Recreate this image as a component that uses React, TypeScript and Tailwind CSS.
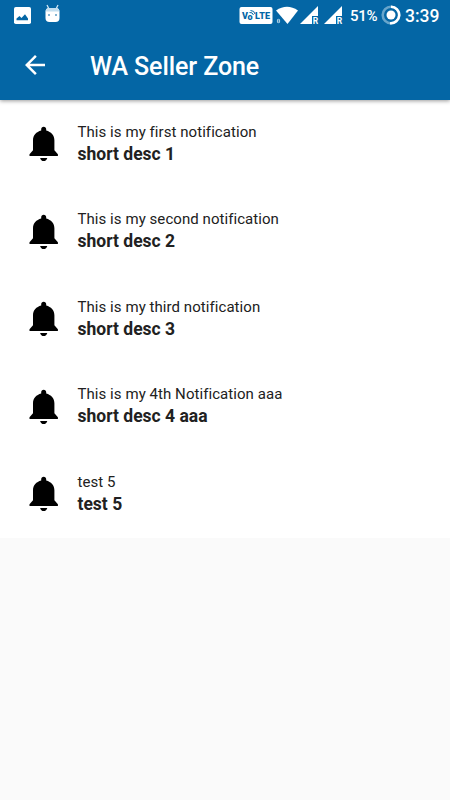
const items = [
  { title: 'This is my first notification', desc: 'short desc 1' },
  { title: 'This is my second notification', desc: 'short desc 2' },
  { title: 'This is my third notification', desc: 'short desc 3' },
  { title: 'This is my 4th Notification aaa', desc: 'short desc 4 aaa' },
  { title: 'test 5', desc: 'test 5' },
];

function Bell() {
  return (
    <svg className="mt-[26px] h-[36px] w-[30px] shrink-0" viewBox="0 0 30 36" fill="#000">
      <path d="M14.700 .8c-1.500 0-2.500 1.100-2.500 2.500v1.200C7.300 5.800 4 9.400 4 14.200V24.300L.5 28.300V30h28.400V28.300L25.400 24.300V14.200C25.400 9.400 22.100 5.800 17.200 4.500V3.300C17.200 1.900 16.200 .8 14.700 .8z" />
      <path d="M11.100 32h7.200c-.5 1.900-1.800 3.100-3.600 3.100s-3.100-1.200-3.600-3.100z" />
    </svg>
  );
}

function Signal() {
  return (
    <svg className="h-[20px] w-[20px] shrink-0" viewBox="0 0 20 20">
      <path d="M18 0V10H12V18H0z" fill="#fff" />
      <text x="12.700" y="17.800" fontSize="8.500" fontWeight="700" fontFamily="Roboto, sans-serif" fill="#fff">R</text>
    </svg>
  );
}

function StatusBar() {
  return (
    <div className="flex h-[31px] items-start text-white">
      <svg className="mt-[7px] ml-[14px] h-[17px] w-[17px]" viewBox="0 0 17 17">
        <rect width="17" height="17" rx="1.800" fill="#fff" />
        <path d="M2.500 13.300V11.500L5.500 9L7.500 11L11 7.200L14 11.500V13.300z" fill="#0466a5" />
      </svg>
      <svg className="mt-[4px] ml-[13px] h-[19px] w-[17px]" viewBox="0 0 17 19">
        <path d="M3 1L5 5M14 1L12 5" stroke="#cfe5f3" strokeWidth="1.300" />
        <path d="M1.500 8Q1.500 4 5 4h7q3.500 0 3.500 4v6q0 4-4 4h-6q-4 0-4-4z" fill="#fff" />
        <path d="M1.500 7.500Q2 4 5 4h7q3 0 3.500 3.500z" fill="#c4dfef" />
        <circle cx="5" cy="11" r="1" fill="#5b9cc4" />
        <circle cx="12" cy="11" r="1" fill="#5b9cc4" />
      </svg>
      <svg className="mt-[7px] ml-[178px] h-[17px] w-[34px] shrink-0" viewBox="0 0 34 17">
        <rect x=".5" width="33" height="17" rx="2" fill="#fff" />
        <g fill="#0466a5" fontFamily="Roboto, sans-serif" fontWeight="900">
          <text x="3" y="12" fontSize="9">V</text>
          <text x="8.500" y="13" fontSize="9">o</text>
          <text x="16" y="12" fontSize="9" textLength="15">LTE</text>
        </g>
        <path d="M10.500 5.500Q13.500 5 14.500 8M11.500 3.500Q15.500 3.500 16 7" stroke="#0466a5" fill="none" />
      </svg>
      <svg className="mt-[6px] ml-[3px] h-[19px] w-[23px] shrink-0" viewBox="0 0 23 19">
        <path d="M0 4.500Q11 -3 22 4.500L11.500 18z" fill="#fff" />
        <ellipse cx="2.500" cy="15" rx="1.700" ry="2.300" fill="#a9cde3" />
        <path d="M2.500 13.500v3" stroke="#0466a5" strokeWidth=".6" />
      </svg>
      <div className="mt-[6px] ml-px flex gap-[4px]">
        <Signal />
        <Signal />
      </div>
      <span className="mt-[7px] ml-[6px] w-[29px] font-medium text-[15px] leading-[18px] tracking-[-0.3px]">51%</span>
      <svg className="mt-[5px] ml-[2px] h-[20px] w-[20px] shrink-0" viewBox="0 0 20 20">
        <circle cx="10" cy="10" r="8.300" fill="none" stroke="#68a5cb" strokeWidth="2.600" />
        <path d="M10 1.700A8.300 8.300 0 1 1 9 18.250" fill="none" stroke="#fff" strokeWidth="2.600" />
        <circle cx="10" cy="10" r="4.500" fill="#fff" />
      </svg>
      <span className="mt-[5px] ml-[4px] font-medium text-[17.500px] leading-[22px]">3:39</span>
    </div>
  );
}

export default function App() {
  return (
    <div className="h-[800px] w-[450px] overflow-hidden bg-[#fafafa] font-['Roboto',sans-serif]">
      <header className="relative h-[100px] bg-[#0466a5] shadow-[0_1px_4px_rgba(0,0,0,0.4)]">
        <StatusBar />
        <div className="flex h-[69px] items-center text-white">
          <svg className="mb-px ml-5 h-[30px] w-[30px]" viewBox="0 0 24 24" fill="#fff">
            <path d="M20 11H7.830l5.590-5.590L12 4l-8 8 8 8 1.410-1.410L7.830 13H20v-2z" />
          </svg>
          <h1 className="mt-[2px] ml-[40px] text-[25px] leading-[30px] font-medium tracking-[-0.08px] whitespace-nowrap">WA Seller Zone</h1>
        </div>
      </header>
      <main className="bg-white">
        {items.map((item) => (
          <div key={item.title} className="flex h-[87.5px] pl-[29px]">
            <Bell />
            <div className="ml-[18.5px] pt-[20.5px] whitespace-nowrap text-[#212121]">
              <p className="text-[15px] leading-[22px] tracking-[0.06px]">{item.title}</p>
              <p className="text-[17.500px] leading-[22px] font-bold">{item.desc}</p>
            </div>
          </div>
        ))}
      </main>
    </div>
  );
}
